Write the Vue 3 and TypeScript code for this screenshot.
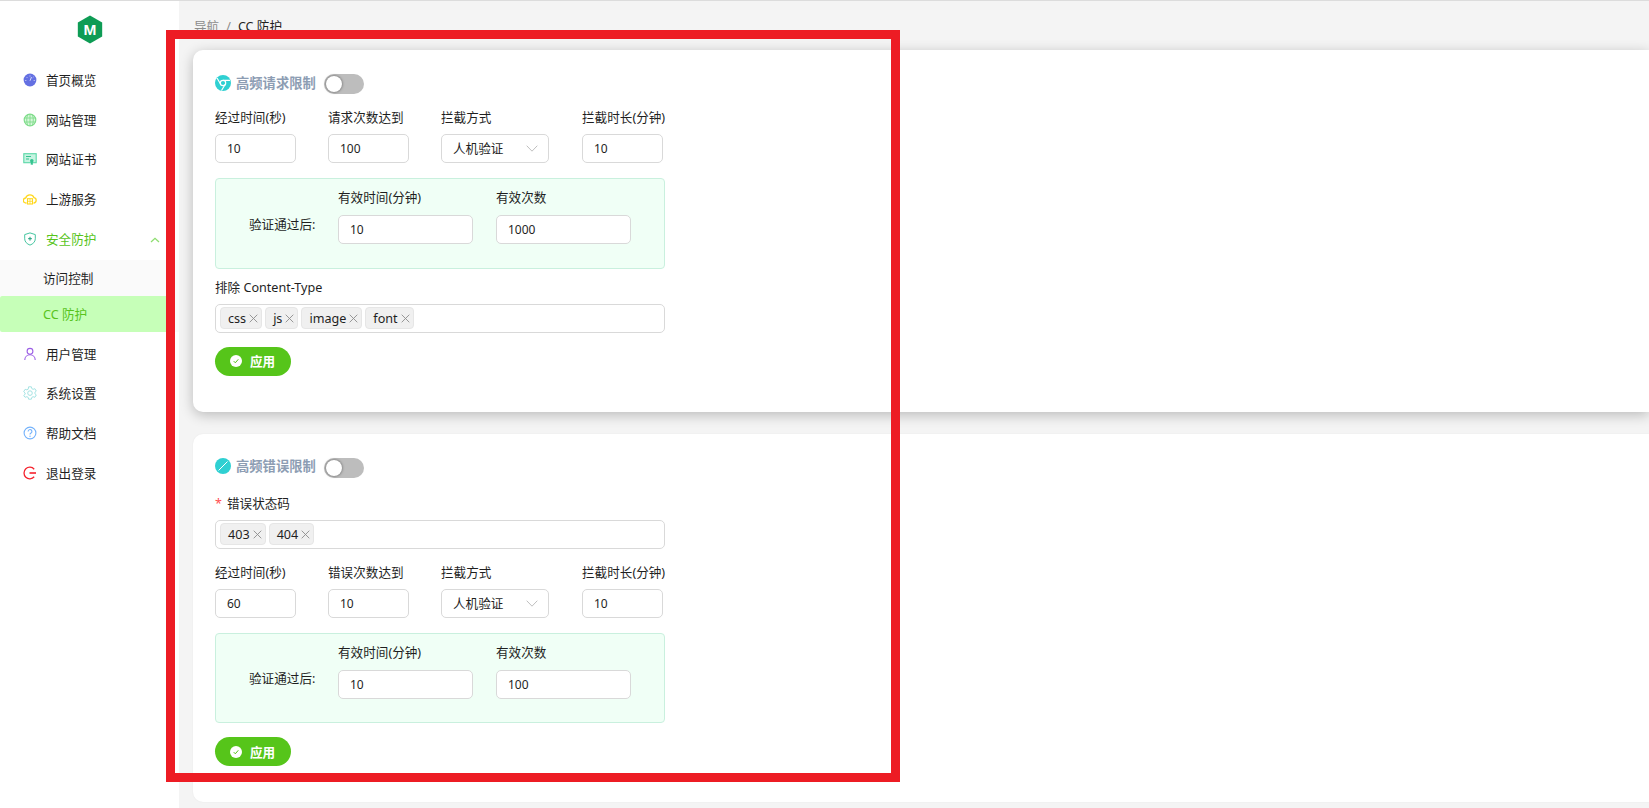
<script setup lang="ts">
interface MenuItem { label: string; icon: string; active?: boolean; open?: boolean; sub?: boolean; selected?: boolean }
const menu: MenuItem[] = [
  { label: '首页概览', icon: 'home' },
  { label: '网站管理', icon: 'globe' },
  { label: '网站证书', icon: 'cert' },
  { label: '上游服务', icon: 'cloud' },
  { label: '安全防护', icon: 'shield', active: true, open: true },
  { label: '访问控制', icon: '', sub: true },
  { label: 'CC 防护', icon: '', sub: true, selected: true },
  { label: '用户管理', icon: 'user' },
  { label: '系统设置', icon: 'gear' },
  { label: '帮助文档', icon: 'help' },
  { label: '退出登录', icon: 'logout' }
]
const reqTags = ['css', 'js', 'image', 'font']
const errTags = ['403', '404']
</script>

<template>
  <div class="page">
    <aside class="side">
      <div class="logo">
        <svg width="26" height="29" viewBox="0 0 26 30">
          <path d="M13 .5 25.600 7.700v14.600L13 29.500.4 22.300V7.700z" fill="#0e9c55" />
          <text x="13" y="20.500" text-anchor="middle" class="logo-m">M</text>
        </svg>
      </div>
      <nav class="menu">
        <div
          v-for="m in menu"
          :key="m.label"
          class="item"
          :class="{ active: m.active, sub: m.sub, selected: m.selected }"
        >
          <svg v-if="m.icon" class="ico" width="14" height="14" viewBox="0 0 14 14" fill="none">
            <template v-if="m.icon === 'home'">
              <circle cx="7" cy="7" r="6.400" fill="#6470e2" />
              <path d="M7 7.800 8.500 4M7 2.500v1M3.500 4l.7.7M10.500 4l-.7.7M2.300 7.500h1M10.700 7.500h1" stroke="#dfe2fa" stroke-width=".9" />
            </template>
            <template v-else-if="m.icon === 'globe'">
              <circle cx="7" cy="7" r="5.800" stroke="#7fdc8a" stroke-width="1.200" fill="#d6f6da" />
              <path d="M1.500 5h11M1.500 9h11M7 1.200v11.600M4.500 2c-1 3-1 7 0 10M9.500 2c1 3 1 7 0 10" stroke="#7fdc8a" stroke-width=".9" />
            </template>
            <template v-else-if="m.icon === 'cert'">
              <rect x=".8" y="1.700" width="12.400" height="9" fill="#c6f3e1" stroke="#5bd8a8" stroke-width="1.100" />
              <path d="M3 4.500h5M3 7h3" stroke="#34c38f" stroke-width="1" />
              <circle cx="8.800" cy="8.800" r="1.800" fill="#34c38f" />
              <path d="M7.800 10h2v3l-1-.6-1 .6z" fill="#34c38f" />
            </template>
            <template v-else-if="m.icon === 'cloud'">
              <path d="M3.500 11H3a2.500 2.500 0 0 1-.3-5A4.400 4.400 0 0 1 11 5.700 2.700 2.700 0 0 1 11 11h-.5" stroke="#ffd81f" stroke-width="1.300" />
              <rect x="4.500" y="6.700" width="5" height="5.300" fill="#fff" stroke="#ffd81f" stroke-width="1.100" />
              <path d="M4.500 9.300h5M7 6.700v5.300" stroke="#ffd81f" stroke-width=".8" />
            </template>
            <template v-else-if="m.icon === 'shield'">
              <path d="M7 .9 12.300 2.600v4.200c0 3-2.300 5.200-5.300 6.300-3-1.100-5.300-3.300-5.300-6.300V2.600z" stroke="#45c5a0" stroke-width="1" />
              <path d="M7 4.800v3.800M5.100 6.700h3.800" stroke="#1f9e7c" stroke-width="1" />
            </template>
            <template v-else-if="m.icon === 'user'">
              <circle cx="7" cy="4.300" r="2.900" stroke="#9b5de5" stroke-width="1.100" />
              <path d="M1.800 13c0-3 2.300-5.200 5.200-5.200s5.200 2.200 5.200 5.200" stroke="#9b5de5" stroke-width="1.100" />
            </template>
            <template v-else-if="m.icon === 'gear'">
              <path d="M5.600.8h2.800l.4 1.800 1.300.7 1.800-.6 1.400 2.400-1.400 1.200v1.400l1.400 1.200-1.400 2.400-1.800-.6-1.300.7-.4 1.800H5.600l-.4-1.800-1.300-.7-1.800.6L.7 9.500l1.400-1.200V6.900L.7 5.700l1.400-2.400 1.800.6 1.300-.7z" stroke="#a5e3e3" stroke-width="1" />
              <circle cx="7" cy="7.100" r="2.300" stroke="#a5e3e3" stroke-width="1" />
            </template>
            <template v-else-if="m.icon === 'help'">
              <circle cx="7" cy="7" r="5.900" stroke="#74b2fb" stroke-width="1.100" />
              <path d="M5.100 5.500a1.900 1.900 0 1 1 2.900 1.600c-.7.400-1 .8-1 1.500" stroke="#74b2fb" stroke-width="1.100" />
              <circle cx="7" cy="10.300" r=".7" fill="#74b2fb" />
            </template>
            <template v-else-if="m.icon === 'logout'">
              <path d="M11.200 3.200A5.800 5.800 0 1 0 11.200 10.800" stroke="#f5222d" stroke-width="1.300" />
              <path d="M6.500 7h6.500" stroke="#f5222d" stroke-width="1.600" />
            </template>
          </svg>
          <span class="label">{{ m.label }}</span>
          <svg v-if="m.open" class="arrow" width="10" height="6" viewBox="0 0 10 6" fill="none">
            <path d="M1 5 5 1.300 9 5" stroke="#8ede70" stroke-width="1.300" />
          </svg>
        </div>
      </nav>
    </aside>

    <main class="main">
      <div class="crumb"><span class="muted">导航</span><span class="sep">/</span><span>CC 防护</span></div>

      <section class="card hover">
        <div class="title">
          <svg width="16" height="16" viewBox="0 0 16 16">
            <circle cx="8" cy="8" r="8" fill="#2fd0d2" />
            <circle cx="8" cy="8" r="2.700" fill="none" stroke="#fff" stroke-width="1.200" />
            <path d="M8 5.300h7M5.700 9.300 2 3M10.300 9.300 6.500 15.500" stroke="#fff" stroke-width="1.200" />
          </svg>
          <span>高频请求限制</span>
          <i class="switch"><b></b></i>
        </div>
        <div class="fields">
          <label class="f w81"><span>经过时间(秒)</span><div class="box">10</div></label>
          <label class="f w81"><span>请求次数达到</span><div class="box">100</div></label>
          <label class="f w108"><span>拦截方式</span>
            <div class="box sel">人机验证
              <svg width="12" height="7" viewBox="0 0 12 7" fill="none"><path d="M.7.700 6 6.200 11.300.7" stroke="#bfbfbf" /></svg>
            </div>
          </label>
          <label class="f w81 last"><span class="nw">拦截时长(分钟)</span><div class="box">10</div></label>
        </div>
        <div class="verify">
          <span class="vlabel">验证通过后:</span>
          <label class="f w135"><span>有效时间(分钟)</span><div class="box">10</div></label>
          <label class="f w135"><span>有效次数</span><div class="box">1000</div></label>
        </div>
        <div class="f full under">
          <span>排除 Content-Type</span>
          <div class="tags">
            <span v-for="t in reqTags" :key="t" class="tag"><u>{{ t }}</u><em>
              <svg width="9" height="9" viewBox="0 0 9 9"><path d="M.7.700l7.600 7.600M8.300.7.700 8.300" stroke="#8c8c8c" stroke-width=".9" /></svg></em></span>
          </div>
        </div>
        <div class="btn">
          <svg width="12" height="12" viewBox="0 0 12 12"><circle cx="6" cy="6" r="6" fill="#fff" /><path d="M3.700 6.100 5.300 7.800 8.300 4.300" fill="none" stroke="#56c51a" stroke-width="1" /></svg>
          <span>应用</span>
        </div>
      </section>

      <section class="card">
        <div class="title">
          <svg width="16" height="16" viewBox="0 0 16 16">
            <circle cx="8" cy="8" r="8" fill="#2fd0d2" />
            <path d="M3.500 12.500 12.500 3.500" stroke="#fff" stroke-width="1" />
          </svg>
          <span>高频错误限制</span>
          <i class="switch"><b></b></i>
        </div>
        <div class="f full first">
          <span><span class="req">*</span>错误状态码</span>
          <div class="tags">
            <span v-for="t in errTags" :key="t" class="tag"><u>{{ t }}</u><em>
              <svg width="9" height="9" viewBox="0 0 9 9"><path d="M.7.700l7.600 7.600M8.300.7.700 8.300" stroke="#8c8c8c" stroke-width=".9" /></svg></em></span>
          </div>
        </div>
        <div class="fields second">
          <label class="f w81"><span>经过时间(秒)</span><div class="box">60</div></label>
          <label class="f w81"><span>错误次数达到</span><div class="box">10</div></label>
          <label class="f w108"><span>拦截方式</span>
            <div class="box sel">人机验证
              <svg width="12" height="7" viewBox="0 0 12 7" fill="none"><path d="M.7.700 6 6.200 11.300.7" stroke="#bfbfbf" /></svg>
            </div>
          </label>
          <label class="f w81 last"><span class="nw">拦截时长(分钟)</span><div class="box">10</div></label>
        </div>
        <div class="verify v2">
          <span class="vlabel">验证通过后:</span>
          <label class="f w135"><span>有效时间(分钟)</span><div class="box">10</div></label>
          <label class="f w135"><span>有效次数</span><div class="box">100</div></label>
        </div>
        <div class="btn">
          <svg width="12" height="12" viewBox="0 0 12 12"><circle cx="6" cy="6" r="6" fill="#fff" /><path d="M3.700 6.100 5.300 7.800 8.300 4.300" fill="none" stroke="#56c51a" stroke-width="1" /></svg>
          <span>应用</span>
        </div>
      </section>
    </main>

    <div class="mark"></div>
  </div>
</template>

<style>
html, body { margin: 0; overflow: hidden; background: #fff; }
</style>

<style scoped>
.page {
  position: relative;
  display: flex;
  width: 1649px;
  height: 808px;
  overflow: hidden;
  border-top: 1px solid #dcdcdc;
  box-sizing: border-box;
  font: 12.6px/20px "Noto Sans", "Noto Sans CJK SC", sans-serif;
  color: #1f1f1f;
}
.side { width: 179px; flex: none; background: #fff; }
.logo { display: flex; justify-content: center; padding-top: 14px; height: 45.200px; }
.logo svg { display: block; }
.logo-m { font: 700 16px "Liberation Sans", sans-serif; fill: #fff; }
.item { display: flex; align-items: center; height: 39.670px; padding-left: 23px; position: relative; }
.ico { flex: none; margin-right: 9px; }
.label { line-height: 20px; position: relative; top: 1px; }
.item.active .label { color: #58c41c; }
.arrow { position: absolute; left: 150px; top: 18px; }
.item.sub { height: 36px; padding-left: 43px; background: #fafafa; }
.item.active { margin-bottom: 1.500px; }
.item.selected { background: linear-gradient(90deg, #c6ffb8 170px, #fafafa 170px); color: #58c41c; border-radius: 2px 0 0 2px; margin-bottom: 2px; }
.main { flex: 1; min-width: 0; background: #f4f4f4; padding: 16px 0 0 14px; }
.crumb { display: flex; align-items: center; gap: 7px; height: 20px; margin-bottom: 13px; padding-left: 1px; }
.muted, .sep { color: #8c8c8c; }
.card { background: #fff; border-radius: 10px 0 0 10px; padding: 24px 0 36px 22px; margin-bottom: 22px; box-shadow: 0 0 2px rgba(0, 0, 0, .06); }
.card.hover { box-shadow: 0 3px 13px rgba(0, 0, 0, .24); }
.title { display: flex; align-items: center; height: 20px; font-size: 13.300px; font-weight: 700; color: #8d9db3; }
.title svg { margin-right: 5px; position: relative; top: -1.500px; }
.title > span { position: relative; top: -1.500px; }
.switch { width: 40px; height: 20px; margin-left: 8px; border-radius: 10px; background: #bdbdbd; display: block; position: relative; }
.switch b { position: absolute; left: 2px; top: 2px; width: 16px; height: 16px; border-radius: 50%; background: #fff; box-shadow: 0 0 3px rgba(0, 0, 0, .55); }
.fields { display: flex; margin-top: 14px; }
.fields .f + .f { margin-left: 32px; }
.fields .f.last { margin-left: 33px; }
.f { display: flex; flex-direction: column; gap: 6px; }
.nw { white-space: nowrap; }
.w81 { width: 81px; }
.w108 { width: 108px; }
.w135 { width: 135px; }
.box {
  height: 29px;
  box-sizing: border-box;
  border: 1px solid #d9d9d9;
  border-radius: 5px;
  background: #fff;
  padding-left: 11px;
  line-height: 27px;
  font-size: 12px;
}
.sel { display: flex; align-items: center; justify-content: space-between; padding-right: 10px; font-size: 12.600px; }
.verify {
  display: flex;
  align-items: center;
  width: 450px;
  height: 90.500px;
  box-sizing: border-box;
  margin-top: 15px;
  padding: 0 0 14px 32px;
  border: 1px solid #c9f0de;
  border-radius: 4px;
  background: #f0fff6;
}
.verify .f { gap: 7px; }
.verify .f + .f { margin-left: 23px; }
.vlabel { width: 90px; flex: none; margin-top: 17px; padding-left: 1px; box-sizing: border-box; }
.full { width: 450px; margin-top: 15px; }
.full.first { margin-top: 16px; }
.under { margin-top: 9px; }
.tags { display: flex; align-items: center; gap: 3px; height: 29px; box-sizing: border-box; border: 1px solid #d9d9d9; border-radius: 5px; padding-left: 4px; }
.tag { display: flex; align-items: center; height: 22px; box-sizing: border-box; padding: 0 3px 0 7px; background: #f0f0f0; border: 1px solid #e6e6e6; border-radius: 4px; line-height: 20px; }
.tag u { text-decoration: none; position: relative; top: 1px; }
.tag em { display: flex; margin-left: 3px; }
.req { color: #ff4d4f; margin-right: 5px; }
.second { margin-top: 14px; }
.btn {
  display: flex;
  align-items: center;
  gap: 8px;
  width: 76px;
  height: 29px;
  margin-top: 14px;
  box-sizing: border-box;
  padding-left: 15px;
  border-radius: 15px;
  background: #56c51a;
  color: #fff;
  font-weight: 700;
}
.btn span { position: relative; top: 1px; }
.mark {
  position: absolute;
  left: 166px;
  top: 29px;
  width: 734px;
  height: 752px;
  box-sizing: border-box;
  border: 9px solid #ed1c24;
  pointer-events: none;
}
</style>
